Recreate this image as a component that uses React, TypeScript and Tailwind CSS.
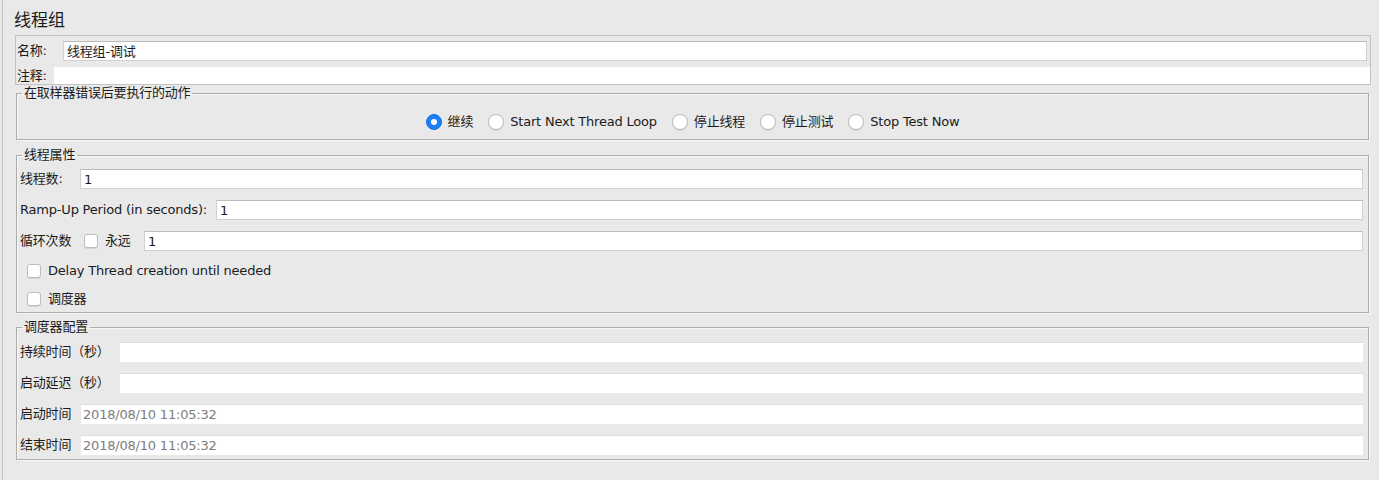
import React from "react";

const inputBase =
  "h-[20px] bg-white border border-[#d0d0d0] border-t-[#bcbcbc] pl-[3px] flex items-center leading-none";

function Radio({ checked, label }: { checked?: boolean; label: string }) {
  return (
    <div className="flex items-center gap-[6px]">
      {checked ? (
        <span className="w-[16px] h-[16px] rounded-full bg-[#1b7ffa] border border-[#1670e0] flex items-center justify-center">
          <span className="w-[6px] h-[6px] rounded-full bg-white" />
        </span>
      ) : (
        <span className="w-[16px] h-[16px] rounded-full bg-white border border-[#b9b9b9] shadow-[0_1px_0_#d8d8d8]" />
      )}
      <span>{label}</span>
    </div>
  );
}

function Check() {
  return (
    <span className="w-[14px] h-[14px] rounded-[3px] bg-white border border-[#bdbdbd] shadow-[0_1px_0_#d6d6d6] shrink-0" />
  );
}

function Group({
  title,
  className,
  children,
}: {
  title: string;
  className?: string;
  children: React.ReactNode;
}) {
  return (
    <fieldset
      className={
        "ml-[1px] mr-[2px] border border-[#ababab] shadow-[1px_1px_0_#f7f7f7,inset_1px_1px_0_#f7f7f7] " +
        (className ?? "")
      }
    >
      <legend className="ml-[5px] px-[2px] leading-[16px]">{title}</legend>
      {children}
    </fieldset>
  );
}

export default function App() {
  return (
    <div className="h-[480px] w-full bg-[#e9e9e9] flex font-['DejaVu_Sans','Noto_Sans_CJK_SC',sans-serif] text-[13px] leading-[16px] tracking-[-0.2px] text-[#1b1b1b] overflow-hidden">
      <div className="w-[2px] shrink-0" />
      <div className="w-px bg-[#c4c4c4] shrink-0" />
      <div className="flex-1 flex flex-col pl-[12px] pr-[8px]">
        <div className="mt-[8px] h-[24px] -ml-px text-[17px] leading-[24px] tracking-normal">
          线程组
        </div>
        <div className="mt-[3px] border border-[#c2c2c2] flex flex-col">
          <div className="flex items-center pt-[5px] pr-[3px]">
            <span className="w-[47px] pl-[1px] shrink-0">名称:</span>
            <div className={"flex-1 " + inputBase + " border-[#c6c6c6]"}>线程组-调试</div>
          </div>
          <div className="flex items-center mt-[6px]">
            <span className="w-[38px] pl-[1px] shrink-0">注释:</span>
            <div className="flex-1 h-[17px] bg-white" />
          </div>
        </div>

        <Group title="在取样器错误后要执行的动作">
          <div className="flex justify-center items-center gap-[15px] pt-[13px] pb-[9px] h-[38px]">
            <Radio checked label="继续" />
            <Radio label="Start Next Thread Loop" />
            <Radio label="停止线程" />
            <Radio label="停止测试" />
            <Radio label="Stop Test Now" />
          </div>
        </Group>

        <Group title="线程属性" className="mt-[7px]">
          <div className="flex flex-col pl-[3px] pr-[5px] pt-[6px] pb-[5px]">
            <div className="flex items-center">
              <span className="w-[60px] shrink-0">线程数:</span>
              <div className={"flex-1 " + inputBase}>1</div>
            </div>
            <div className="flex items-center mt-[11px]">
              <span className="w-[196px] shrink-0">Ramp-Up Period (in seconds):</span>
              <div className={"flex-1 " + inputBase}>1</div>
            </div>
            <div className="flex items-center mt-[11px]">
              <span className="w-[64px] shrink-0">循环次数</span>
              <Check />
              <span className="ml-[7px] w-[39px] shrink-0">永远</span>
              <div className={"flex-1 " + inputBase}>1</div>
            </div>
            <div className="flex items-center mt-[12px] h-[16px] pl-[7px] gap-[7px]">
              <Check />
              <span>Delay Thread creation until needed</span>
            </div>
            <div className="flex items-center mt-[12px] h-[16px] pl-[7px] gap-[7px]">
              <Check />
              <span>调度器</span>
            </div>
          </div>
        </Group>

        <Group title="调度器配置" className="mt-[6px]">
          <div className="flex flex-col pl-[3px] pr-[5px] pt-[7px] pb-[4px] gap-[11px]">
            <div className="flex items-center">
              <span className="w-[100px] shrink-0">持续时间（秒）</span>
              <div className="flex-1 h-[20px] bg-white border-t border-[#dedede]" />
            </div>
            <div className="flex items-center">
              <span className="w-[100px] shrink-0">启动延迟（秒）</span>
              <div className="flex-1 h-[20px] bg-white border-t border-[#dedede]" />
            </div>
            <div className="flex items-center">
              <span className="w-[61px] shrink-0">启动时间</span>
              <div className="flex-1 h-[20px] bg-white border-t border-[#dedede] pl-[2px] flex items-center text-[#7d7d7d]">
                2018/08/10 11:05:32
              </div>
            </div>
            <div className="flex items-center">
              <span className="w-[61px] shrink-0">结束时间</span>
              <div className="flex-1 h-[20px] bg-white border-t border-[#dedede] pl-[2px] flex items-center text-[#7d7d7d]">
                2018/08/10 11:05:32
              </div>
            </div>
          </div>
        </Group>
      </div>
    </div>
  );
}
